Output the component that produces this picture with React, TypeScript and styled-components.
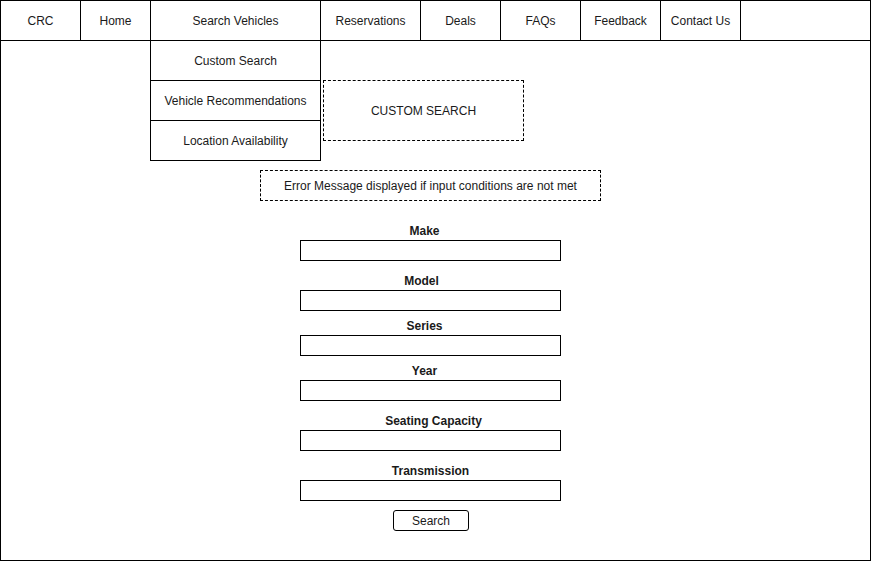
import * as React from 'react';
import styled, { createGlobalStyle } from 'styled-components';

const GlobalStyle = createGlobalStyle`
  html, body {
    margin: 0;
    padding: 0;
    background: #ffffff;
  }
  body {
    font-family: 'Liberation Sans', Arial, sans-serif;
    font-size: 12px;
    color: #1a1a1a;
  }
`;

const Frame = styled.div`
  box-sizing: border-box;
  width: 871px;
  height: 561px;
  border: 1px solid #000;
  display: flex;
  flex-direction: column;
  background: #fff;
`;

const NavBar = styled.nav`
  display: flex;
  height: 40px;
  box-sizing: border-box;
  border-bottom: 1px solid #000;
  flex-shrink: 0;
`;

const NavCell = styled.div<{ $w: number }>`
  position: relative;
  box-sizing: border-box;
  width: ${(p) => p.$w}px;
  border-right: 1px solid #000;
  display: flex;
  align-items: center;
  justify-content: center;
  white-space: nowrap;
`;

const Dropdown = styled.div`
  position: absolute;
  top: 40px;
  left: -1px;
  width: 171px;
  box-sizing: border-box;
  border-left: 1px solid #000;
  border-right: 1px solid #000;
  background: #fff;
  z-index: 2;
`;

const DropItem = styled.div`
  height: 40px;
  box-sizing: border-box;
  border-bottom: 1px solid #000;
  display: flex;
  align-items: center;
  justify-content: center;
`;

const Content = styled.div`
  display: flex;
  flex-direction: column;
  align-items: flex-start;
`;

const DashedBox = styled.div<{ $top: number; $left: number; $w: number; $h: number }>`
  box-sizing: border-box;
  margin-top: ${(p) => p.$top}px;
  margin-left: ${(p) => p.$left}px;
  width: ${(p) => p.$w}px;
  height: ${(p) => p.$h}px;
  border: 1px dashed #000;
  display: flex;
  align-items: center;
  justify-content: center;
`;

const Form = styled.form`
  margin-top: 19px;
  margin-left: 299px;
  width: 261px;
  display: flex;
  flex-direction: column;
`;

const Field = styled.div<{ $gap: number }>`
  display: flex;
  flex-direction: column;
  margin-top: ${(p) => p.$gap}px;
`;

const Label = styled.label<{ $shift: number }>`
  box-sizing: border-box;
  height: 20px;
  line-height: 20px;
  padding-top: 1px;
  text-align: center;
  font-weight: bold;
  position: relative;
  left: ${(p) => p.$shift}px;
`;

const Input = styled.input`
  box-sizing: border-box;
  width: 261px;
  height: 21px;
  border: 1px solid #000;
  border-radius: 0;
  padding: 0 4px;
  margin: 0;
  font: inherit;
  outline: none;
`;

const SearchButton = styled.button`
  align-self: flex-start;
  margin: 9px 0 0 93px;
  box-sizing: border-box;
  width: 76px;
  height: 21px;
  border: 1px solid #000;
  border-radius: 3px;
  background: #fff;
  font: inherit;
  color: #1a1a1a;
  padding: 0;
`;

const navItems: [string, number][] = [
  ['CRC', 80],
  ['Home', 70],
  ['Search Vehicles', 170],
  ['Reservations', 100],
  ['Deals', 80],
  ['FAQs', 80],
  ['Feedback', 80],
  ['Contact Us', 80],
];

// label, gap above, horizontal nudge of the label
const fields: [string, number, number][] = [
  ['Make', 0, -6],
  ['Model', 9, -9],
  ['Series', 4, -6],
  ['Year', 4, -6],
  ['Seating Capacity', 9, 3],
  ['Transmission', 9, 0],
];

const App = () => {
  return (
    <>
      <GlobalStyle />
      <Frame>
        <NavBar>
          {navItems.map(([label, w]) => (
            <NavCell key={label} $w={w}>
              {label}
              {label === 'Search Vehicles' && (
                <Dropdown>
                  <DropItem>Custom Search</DropItem>
                  <DropItem>Vehicle Recommendations</DropItem>
                  <DropItem>Location Availability</DropItem>
                </Dropdown>
              )}
            </NavCell>
          ))}
        </NavBar>
        <Content>
          <DashedBox $top={39} $left={322} $w={201} $h={61}>
            CUSTOM SEARCH
          </DashedBox>
          <DashedBox $top={29} $left={259} $w={341} $h={31}>
            Error Message displayed if input conditions are not met
          </DashedBox>
          <Form onSubmit={(e) => e.preventDefault()}>
            {fields.map(([label, gap, shift]) => (
              <Field key={label} $gap={gap}>
                <Label $shift={shift}>{label}</Label>
                <Input type="text" />
              </Field>
            ))}
            <SearchButton type="submit">Search</SearchButton>
          </Form>
        </Content>
      </Frame>
    </>
  );
};

export default App;
